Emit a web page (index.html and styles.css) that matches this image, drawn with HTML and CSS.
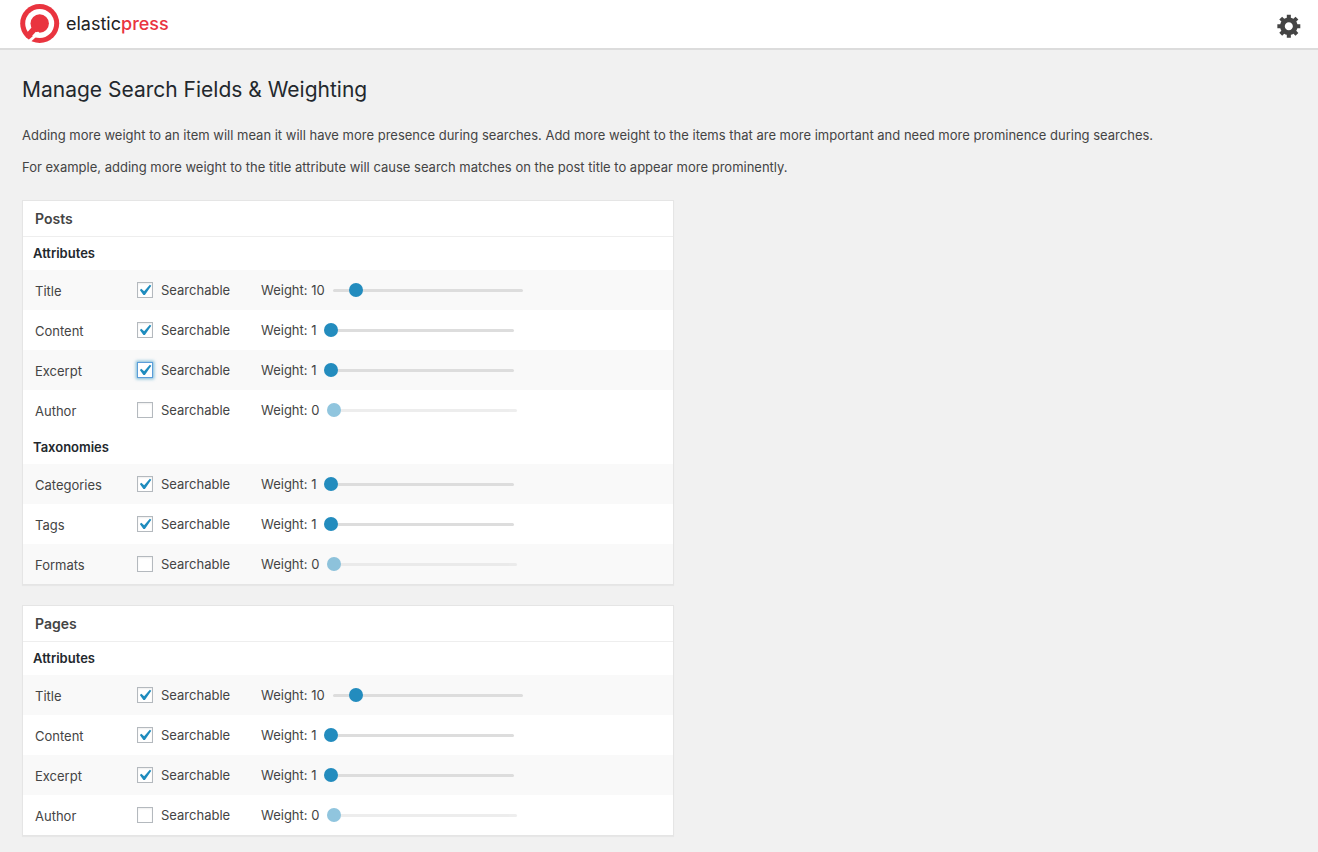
FILE: index.html
```
<!DOCTYPE html>
<html lang="en">
<head>
<meta charset="utf-8">
<meta name="viewport" content="width=device-width, initial-scale=1">
<title>Manage Search Fields &amp; Weighting</title>
<link rel="stylesheet" href="styles.css">
</head>
<body>
<header class="topbar">
  <a class="brand" href="#">
    <svg class="brand-mark" viewBox="0 0 40 40" aria-hidden="true">
      <circle cx="19.700" cy="19.500" r="19.500" fill="#e9343f"/>
      <circle cx="19.700" cy="19.500" r="14.500" fill="#fff"/>
      <circle cx="19.700" cy="19.500" r="9.200" fill="#e9343f"/>
      <path d="M17 22 L7 33" stroke="#e9343f" stroke-width="6"/>
      <path d="M19 28.500 L6 40" stroke="#fff" stroke-width="3"/>
    </svg>
    <span class="brand-name">elastic<span class="brand-accent">press</span></span>
  </a>
  <button class="settings" type="button" aria-label="Settings">
    <svg class="settings-icon" viewBox="0 0 20 20" aria-hidden="true"><path fill="currentColor" d="M18 12h-2.180c-.17.7-.44 1.350-.81 1.930l1.540 1.540-2.100 2.100-1.540-1.540c-.58.36-1.230.63-1.910.79V19H8v-2.180c-.68-.16-1.330-.43-1.910-.79l-1.540 1.540-2.120-2.120 1.540-1.540c-.36-.58-.63-1.230-.79-1.910H1V9.030h2.170c.16-.7.44-1.350.8-1.940L2.430 5.550l2.100-2.100 1.540 1.540c.58-.37 1.240-.64 1.930-.81V2h3v2.180c.68.16 1.330.43 1.910.79l1.540-1.540 2.120 2.120-1.540 1.540c.36.59.64 1.240.8 1.940H18V12zm-8.500 1.500c1.660 0 3-1.340 3-3s-1.340-3-3-3-3 1.340-3 3 1.340 3 3 3z"/></svg>
  </button>
</header>
<main class="page">
  <h1 class="page-title">Manage Search Fields &amp; Weighting</h1>
  <p class="intro">Adding more weight to an item will mean it will have more presence during searches. Add more weight to the items that are more important and need more prominence during searches.</p>
  <p class="intro">For example, adding more weight to the title attribute will cause search matches on the post title to appear more prominently.</p>
  <div class="cards">
    <section class="card">
      <h2 class="card-title">Posts</h2>
      <div class="groups">
        <div class="group">
          <h3 class="group-title">Attributes</h3>
          <div class="field"><span class="field-name">Title</span><label class="searchable"><input class="check" type="checkbox" checked>Searchable</label><label class="weight" for="posts-title">Weight: 10</label><input class="slider" id="posts-title" type="range" min="1" max="100" value="10"></div>
          <div class="field"><span class="field-name">Content</span><label class="searchable"><input class="check" type="checkbox" checked>Searchable</label><label class="weight" for="posts-content">Weight: 1</label><input class="slider" id="posts-content" type="range" min="1" max="100" value="1"></div>
          <div class="field"><span class="field-name">Excerpt</span><label class="searchable"><input class="check is-focused" type="checkbox" checked>Searchable</label><label class="weight" for="posts-excerpt">Weight: 1</label><input class="slider" id="posts-excerpt" type="range" min="1" max="100" value="1"></div>
          <div class="field"><span class="field-name">Author</span><label class="searchable"><input class="check" type="checkbox">Searchable</label><label class="weight" for="posts-author">Weight: 0</label><input class="slider" id="posts-author" type="range" min="1" max="100" value="1" disabled></div>
        </div>
        <div class="group">
          <h3 class="group-title">Taxonomies</h3>
          <div class="field"><span class="field-name">Categories</span><label class="searchable"><input class="check" type="checkbox" checked>Searchable</label><label class="weight" for="posts-categories">Weight: 1</label><input class="slider" id="posts-categories" type="range" min="1" max="100" value="1"></div>
          <div class="field"><span class="field-name">Tags</span><label class="searchable"><input class="check" type="checkbox" checked>Searchable</label><label class="weight" for="posts-tags">Weight: 1</label><input class="slider" id="posts-tags" type="range" min="1" max="100" value="1"></div>
          <div class="field"><span class="field-name">Formats</span><label class="searchable"><input class="check" type="checkbox">Searchable</label><label class="weight" for="posts-formats">Weight: 0</label><input class="slider" id="posts-formats" type="range" min="1" max="100" value="1" disabled></div>
        </div>
      </div>
    </section>
    <section class="card">
      <h2 class="card-title">Pages</h2>
      <div class="groups">
        <div class="group">
          <h3 class="group-title">Attributes</h3>
          <div class="field"><span class="field-name">Title</span><label class="searchable"><input class="check" type="checkbox" checked>Searchable</label><label class="weight" for="pages-title">Weight: 10</label><input class="slider" id="pages-title" type="range" min="1" max="100" value="10"></div>
          <div class="field"><span class="field-name">Content</span><label class="searchable"><input class="check" type="checkbox" checked>Searchable</label><label class="weight" for="pages-content">Weight: 1</label><input class="slider" id="pages-content" type="range" min="1" max="100" value="1"></div>
          <div class="field"><span class="field-name">Excerpt</span><label class="searchable"><input class="check" type="checkbox" checked>Searchable</label><label class="weight" for="pages-excerpt">Weight: 1</label><input class="slider" id="pages-excerpt" type="range" min="1" max="100" value="1"></div>
          <div class="field"><span class="field-name">Author</span><label class="searchable"><input class="check" type="checkbox">Searchable</label><label class="weight" for="pages-author">Weight: 0</label><input class="slider" id="pages-author" type="range" min="1" max="100" value="1" disabled></div>
        </div>
      </div>
    </section>
  </div>
</main>
</body>
</html>
```
FILE: styles.css
```
* { box-sizing: border-box; }
body {
  margin: 0;
  background: #f1f1f1;
  color: #444;
  font: 13px/20px Inter, "Liberation Sans", sans-serif;
}
.topbar {
  display: flex;
  align-items: flex-start;
  justify-content: space-between;
  height: 50px;
  padding: 4px 15px 0 20px;
  background: #fff;
  border-bottom: 2px solid #dcdcdc;
}
.brand {
  display: flex;
  align-items: center;
  gap: 6px;
  color: #222;
  text-decoration: none;
}
.brand-mark { width: 40px; height: 40px; }
.brand-name {
  font-size: 18px;
  font-weight: 400;
  line-height: 24px;
}
.brand-accent { color: #e9343f; font-weight: 500; }
.settings {
  margin: 8px 0 0;
  padding: 0;
  border: 0;
  background: none;
  color: #444;
  line-height: 0;
}
.settings-icon { width: 27px; height: 27px; }
.page { padding: 24px 22px 16px; }
.page-title {
  margin: 0 0 20px;
  color: #23282d;
  font-size: 21px;
  font-weight: 400;
  line-height: 31px;
}
.intro { margin: 0 0 12px; }
.cards {
  display: grid;
  gap: 20px;
  max-width: 652px;
  padding-top: 11px;
}
.card {
  background: #fff;
  border: 1px solid #e5e5e5;
  box-shadow: 0 1px 1px rgba(0, 0, 0, 0.04);
}
.card-title {
  margin: 0;
  padding: 0 12px;
  border-bottom: 1px solid #eee;
  font-size: 14px;
  font-weight: 600;
  line-height: 35px;
}
.groups { display: grid; gap: 1px; }
.group-title {
  margin: 0;
  padding: 0 10px;
  color: #23282d;
  font-size: 13px;
  font-weight: 600;
  line-height: 33px;
}
.field {
  display: flex;
  align-items: center;
  height: 40px;
  padding: 0 12px;
}
.field:nth-child(even) { background: #f9f9f9; }
.field-name { width: 102px; padding-top: 2px; }
.searchable {
  display: flex;
  align-items: center;
  gap: 8px;
  width: 124px;
}
.check {
  appearance: none;
  width: 16px;
  height: 16px;
  margin: 0;
  background: #fff;
  border: 1px solid #b4b9be;
  box-shadow: inset 0 1px 2px rgba(0, 0, 0, 0.07);
}
.check:checked {
  background: #fff url("data:image/svg+xml,%3Csvg xmlns='http://www.w3.org/2000/svg' viewBox='4.1 3.3 12.7 12.7'%3E%3Cpath fill='%231e8cbe' d='M14.83 4.89l1.34.94-5.81 8.38H9.02L5.78 9.67l1.34-1.25 2.57 2.4z'/%3E%3C/svg%3E") center / 14px 14px no-repeat;
}
.check.is-focused {
  border-color: #5b9dd9;
  box-shadow: 0 0 3px 1px rgba(30, 140, 190, 0.6);
}
.slider {
  appearance: none;
  width: 190px;
  height: 14px;
  margin: 0 0 0 8px;
  background: none;
}
.slider::-webkit-slider-runnable-track {
  height: 3px;
  border-radius: 2px;
  background: #ddd;
}
.slider::-webkit-slider-thumb {
  appearance: none;
  width: 14px;
  height: 14px;
  margin-top: -6px;
  border-radius: 50%;
  background: #238cbe;
}
.slider:disabled { opacity: 0.5; }
```
